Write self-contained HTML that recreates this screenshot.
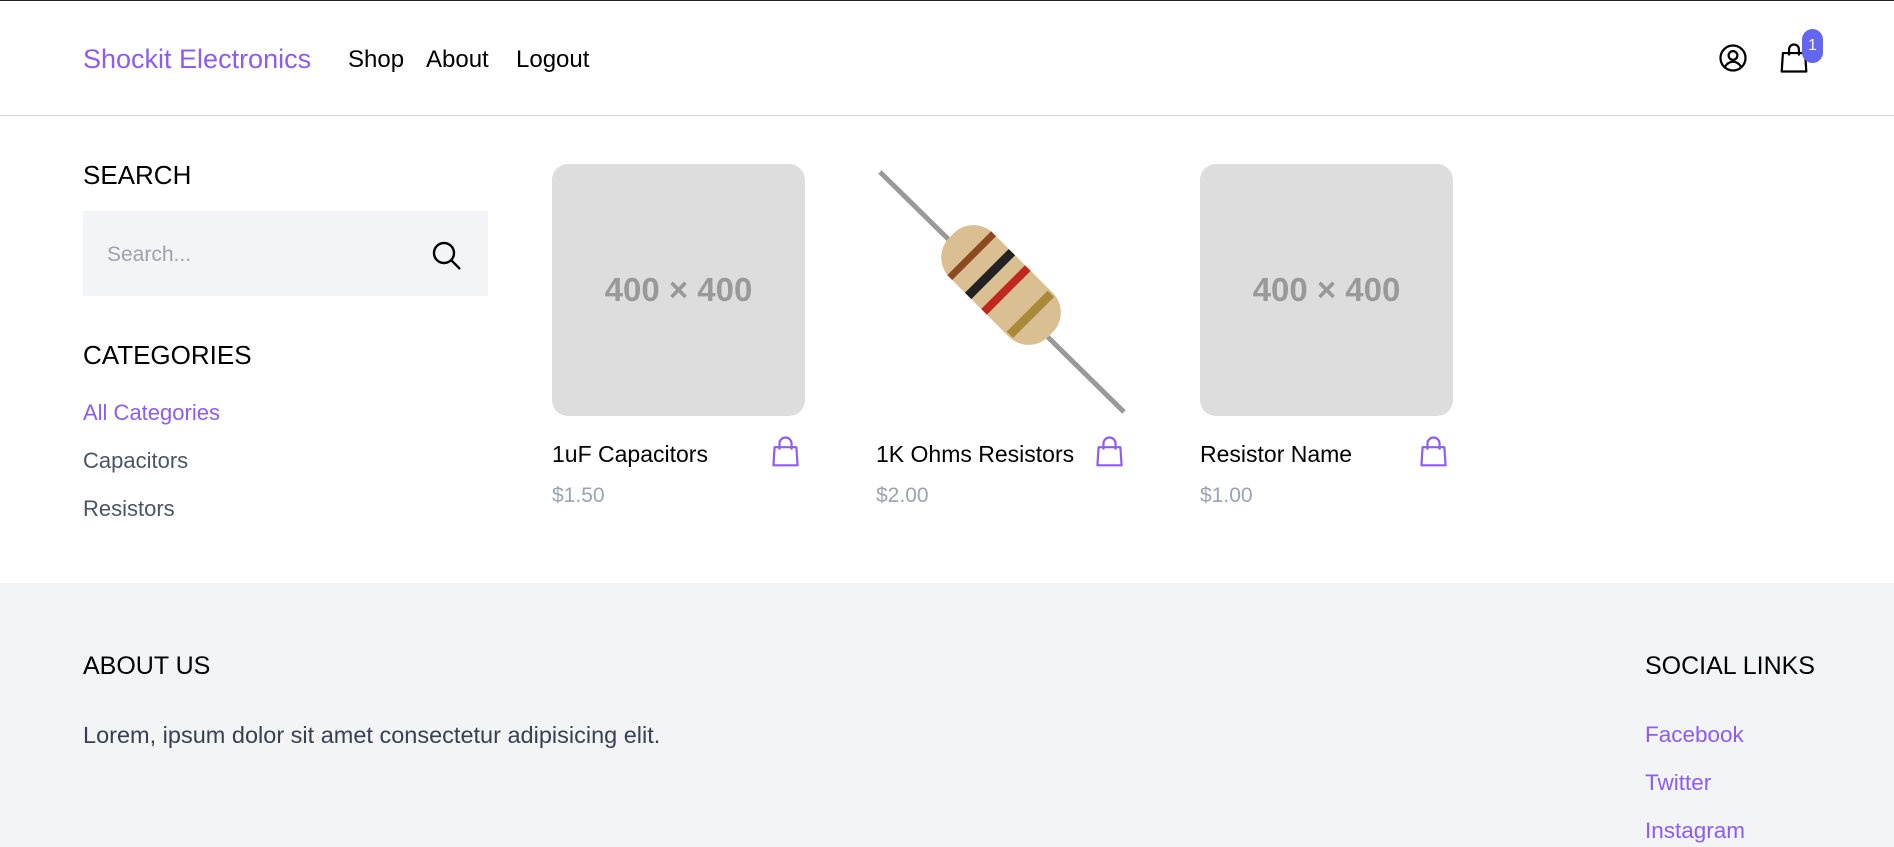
<!DOCTYPE html>
<html><head><meta charset="utf-8"><style>
*{margin:0;padding:0;box-sizing:border-box}
body{width:1894px;height:847px;overflow:hidden;font-family:"Liberation Sans",sans-serif;background:#fff;color:#000;position:relative}
.a{position:absolute;white-space:nowrap}
.top{position:absolute;left:0;top:0;width:1894px;height:1px;background:#222}
.hdr{position:absolute;left:0;top:115px;width:1894px;height:1px;background:#d4d4d4}
.nav{font-size:24px;top:46px}
.ph{position:absolute;width:253px;height:252px;top:164px;background:#dddddd;border-radius:16px;display:flex;align-items:center;justify-content:center;color:#999;font-size:33px;font-weight:bold}
.t{font-size:23px;top:441px}
.p{font-size:21px;top:484px;color:#9ca3af}
.foot{position:absolute;left:0;top:583px;width:1894px;height:264px;background:#f3f4f6}
.h{font-size:25px}
.pur{color:#8b5cf6}
</style></head><body>
<div class="top"></div>
<div class="a" style="left:83px;top:44px;font-size:27px;color:#8b5cf6">Shockit Electronics</div>
<div class="a nav" style="left:348px">Shop</div>
<div class="a nav" style="left:426px">About</div>
<div class="a nav" style="left:516px">Logout</div>
<svg class="a" style="left:1718px;top:43px" width="30" height="30" viewBox="0 0 24 24" fill="none" stroke="#000" stroke-width="1.8"><circle cx="12" cy="12" r="10"/><circle cx="12" cy="10" r="3.5"/><path d="M5.5 19c2-3 4-4 6.5-4s4.5 1 6.5 4"/></svg>
<svg class="a" style="left:1779px;top:42px" width="30" height="32" viewBox="0 0 24 26" fill="none" stroke="#000" stroke-width="1.8" stroke-linejoin="round"><path d="M3 9h18l1 15H2z"/><path d="M8 11V6a4 4 0 0 1 8 0v5"/></svg>
<div class="a" style="left:1802px;top:29px;width:21px;height:34px;border-radius:11px;background:#6366f1;color:#fff;font-size:16px;text-align:center;line-height:34px">1</div>
<div class="hdr"></div>

<div class="a h" style="left:83px;top:160px;font-size:26px">SEARCH</div>
<div class="a" style="left:83px;top:211px;width:405px;height:85px;background:#f3f4f6"></div>
<div class="a" style="left:107px;top:243px;font-size:21px;color:#9ca3af">Search...</div>
<svg class="a" style="left:430px;top:239px" width="32" height="32" viewBox="0 0 24 24" fill="none" stroke="#000" stroke-width="1.8" stroke-linecap="round"><circle cx="10.5" cy="10.5" r="7.5"/><path d="M16 16l6 6"/></svg>
<div class="a h" style="left:83px;top:340px;font-size:26px">CATEGORIES</div>
<div class="a pur" style="left:83px;top:400px;font-size:22px">All Categories</div>
<div class="a" style="left:83px;top:448px;font-size:22px;color:#4b5563">Capacitors</div>
<div class="a" style="left:83px;top:496px;font-size:22px;color:#4b5563">Resistors</div>

<div class="ph" style="left:552px">400 × 400</div>
<svg class="a" style="left:876px;top:164px" width="253" height="252" viewBox="0 0 253 252">
<line x1="4" y1="8" x2="248" y2="248" stroke="#999" stroke-width="5"/>
<rect x="55" y="90" width="140" height="62" rx="28" fill="#d9bf92" transform="rotate(45 125 121)"/>
<g transform="rotate(45 125 121)"><rect x="80" y="90" width="7" height="62" fill="#8b4a20"/><rect x="105" y="90" width="9" height="62" fill="#222"/><rect x="128" y="90" width="8" height="62" fill="#c0281c"/><rect x="162" y="92" width="9" height="58" fill="#a88a3a"/></g>
</svg>
<div class="ph" style="left:1200px">400 × 400</div>

<div class="a t" style="left:552px">1uF Capacitors</div>
<div class="a t" style="left:876px">1K Ohms Resistors</div>
<div class="a t" style="left:1200px">Resistor Name</div>
<div class="a p" style="left:552px">$1.50</div>
<div class="a p" style="left:876px">$2.00</div>
<div class="a p" style="left:1200px">$1.00</div>
<svg class="a" style="left:771px;top:436px" width="29" height="32" viewBox="0 0 24 26" fill="none" stroke="#8b5cf6" stroke-width="1.8" stroke-linejoin="round"><path d="M3 9h18l1 15H2z"/><path d="M7 11V6a5 5 0 0 1 10 0v5"/></svg>
<svg class="a" style="left:1095px;top:436px" width="29" height="32" viewBox="0 0 24 26" fill="none" stroke="#8b5cf6" stroke-width="1.8" stroke-linejoin="round"><path d="M3 9h18l1 15H2z"/><path d="M7 11V6a5 5 0 0 1 10 0v5"/></svg>
<svg class="a" style="left:1419px;top:436px" width="29" height="32" viewBox="0 0 24 26" fill="none" stroke="#8b5cf6" stroke-width="1.8" stroke-linejoin="round"><path d="M3 9h18l1 15H2z"/><path d="M7 11V6a5 5 0 0 1 10 0v5"/></svg>

<div class="foot"></div>
<div class="a h" style="left:83px;top:652px">ABOUT US</div>
<div class="a" style="left:83px;top:722px;font-size:23.5px;color:#374151">Lorem, ipsum dolor sit amet consectetur adipisicing elit.</div>
<div class="a h" style="left:1645px;top:652px">SOCIAL LINKS</div>
<div class="a pur" style="left:1645px;top:722px;font-size:22.5px">Facebook</div>
<div class="a pur" style="left:1645px;top:770px;font-size:22.5px">Twitter</div>
<div class="a pur" style="left:1645px;top:818px;font-size:22.5px">Instagram</div>
</body></html>
